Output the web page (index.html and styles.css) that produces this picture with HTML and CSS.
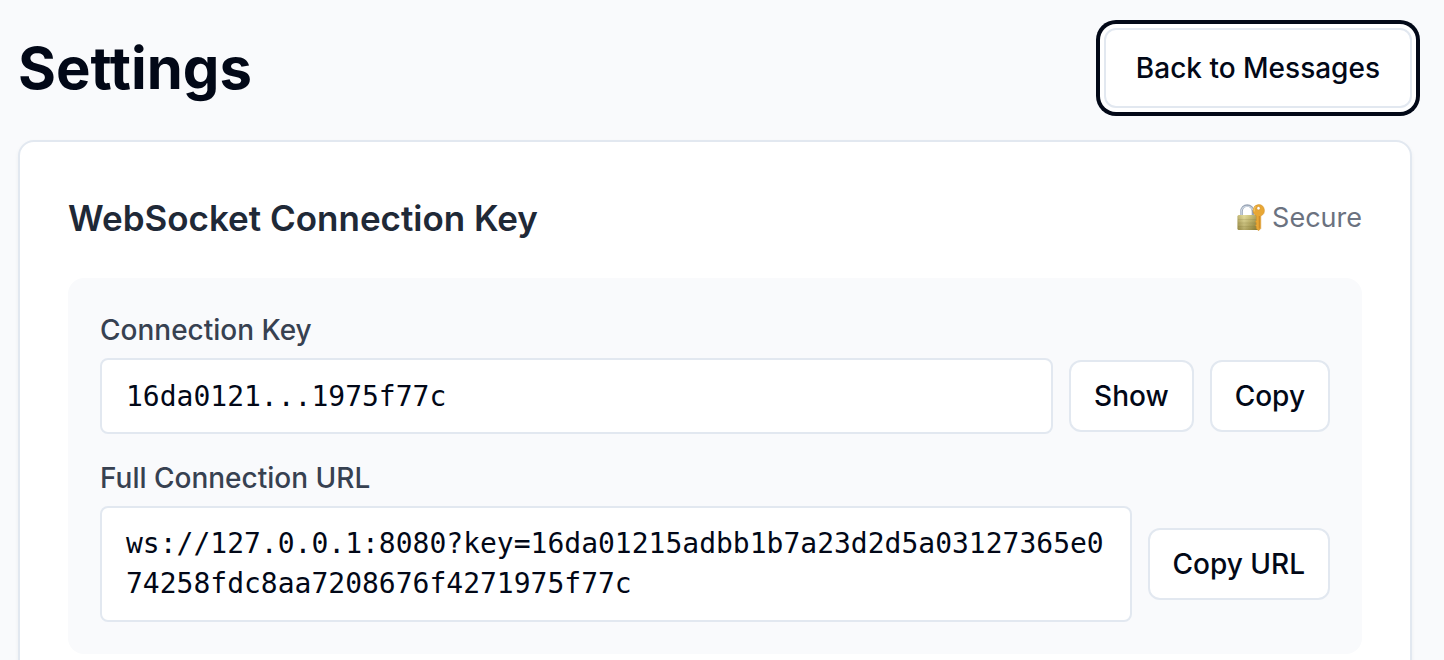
FILE: index.html
```
<!DOCTYPE html>
<html lang="en">
<head>
  <meta charset="utf-8">
  <title>Settings</title>
  <link rel="stylesheet" href="styles.css">
</head>
<body>
  <main class="page">
    <header class="page-header">
      <h1 class="page-title">Settings</h1>
      <button class="button button-large button-focused" type="button">Back to Messages</button>
    </header>

    <section class="card">
      <div class="card-header">
        <h2 class="card-title">WebSocket Connection Key</h2>
        <span class="secure">
          <svg class="secure-icon" viewBox="0 0 30 30" aria-hidden="true">
            <defs>
              <linearGradient id="body" x1="0" y1="0" x2="1" y2="0">
                <stop offset="0" stop-color="#a99c55"/>
                <stop offset="0.3" stop-color="#d9d08c"/>
                <stop offset="0.65" stop-color="#b0a458"/>
                <stop offset="1" stop-color="#807330"/>
              </linearGradient>
              <linearGradient id="shade" x1="0" y1="0" x2="0" y2="1">
                <stop offset="0" stop-color="#fff8c0" stop-opacity="0.3"/>
                <stop offset="1" stop-color="#6b5d20" stop-opacity="0.35"/>
              </linearGradient>
            </defs>
            <path d="M5.500 14V8.500a5.700 6 0 0 1 11.500 0V14" fill="none" stroke="#98a4b5" stroke-width="2.600"/>
            <path d="M5.200 13V8.500a6 6 0 0 1 11.500-1.500" fill="none" stroke="#cdd6e1" stroke-width="1.200"/>
            <rect x="1.500" y="12" width="22" height="15" rx="1.500" fill="url(#body)"/>
            <rect x="1.500" y="12" width="22" height="15" rx="1.500" fill="url(#shade)"/>
            <path d="M2 16.500h21M2 20h21M2 23.500h21" stroke="#81763a" stroke-opacity="0.18"/>
            <path fill-rule="evenodd" fill="#e8a735" stroke="#d08e28" stroke-width="0.500" d="M22.500 1.500a6 6 0 0 1 2.300 11.500V25.500l-2.300 2.300-2.200-2.200v-2l-1-1 1-1.200v-1.600l-1-1 1-1.200v-4.800A6 6 0 0 1 22.500 1.500zM22.500 3.500a1.700 1.700 0 1 0 0 3.400a1.700 1.700 0 0 0 0-3.400z"/>
            <path d="M23.300 13V25.500" stroke="#c07c22" stroke-width="0.800"/>
            <path d="M18.200 8.500a4.500 4.500 0 0 1 1.500-5" fill="none" stroke="#f8cf70"/>
          </svg>
          Secure
        </span>
      </div>

      <div class="panel">
        <div class="field">
          <label class="field-label" for="key">Connection Key</label>
          <div class="field-row">
            <input class="field-value" id="key" type="text" value="16da0121...1975f77c" readonly>
            <button class="button" type="button">Show</button>
            <button class="button" type="button">Copy</button>
          </div>
        </div>
        <div class="field">
          <label class="field-label" for="url">Full Connection URL</label>
          <div class="field-row">
            <textarea class="field-value" id="url" rows="2" readonly>ws://127.0.0.1:8080?key=16da01215adbb1b7a23d2d5a03127365e074258fdc8aa7208676f4271975f77c</textarea>
            <button class="button" type="button">Copy URL</button>
          </div>
        </div>
      </div>
    </section>
  </main>
</body>
</html>
```
FILE: styles.css
```
* {
  box-sizing: border-box;
}

body {
  margin: 0;
  background: #f9fafc;
  color: #020817;
  font-family: Inter, "Liberation Sans", sans-serif;
  font-size: 28px;
  line-height: 40px;
}

.page {
  padding: 28px 32px 32px 18px;
}

.page-header,
.card-header {
  display: flex;
  align-items: center;
  justify-content: space-between;
  margin-bottom: 32px;
}

.page-title {
  margin: 0;
  font-size: 58px;
  font-weight: 700;
  line-height: 72px;
}

.button {
  flex: none;
  height: 72px;
  padding: 0 23px;
  border: 2px solid #e2e8f0;
  border-radius: 12px;
  background: #fff;
  color: inherit;
  font: inherit;
  font-weight: 500;
  white-space: nowrap;
}

.button-large {
  height: 80px;
  padding: 0 30px;
}

.button-focused {
  box-shadow: 0 0 0 4px #fff, 0 0 0 8px #020817;
}

.card {
  padding: 48px;
  border: 2px solid #e2e8f0;
  border-radius: 16px;
  background: #fff;
  box-shadow: 0 2px 4px rgba(0, 0, 0, 0.05);
}

.card-title {
  margin: 0;
  color: #1f2937;
  font-size: 35px;
  font-weight: 600;
  line-height: 56px;
}

.secure {
  display: flex;
  align-items: center;
  gap: 6px;
  color: #6b7280;
  font-size: 27px;
}

.secure-icon {
  width: 30px;
  height: 30px;
}

.panel {
  display: flex;
  flex-direction: column;
  gap: 24px;
  padding: 32px;
  border-radius: 16px;
  background: #f9fafc;
}

.field-label {
  display: block;
  margin-bottom: 8px;
  color: #374151;
  font-weight: 500;
}

.field-row {
  display: flex;
  align-items: center;
  gap: 16px;
}

.field-value {
  display: block;
  flex: 1;
  min-width: 0;
  margin: 0;
  padding: 16px 20px 16px 24px;
  border: 2px solid #e2e8f0;
  border-radius: 8px;
  background: #fff;
  color: inherit;
  font-family: "DejaVu Sans Mono", monospace;
  font-size: 28px;
  line-height: 40px;
  word-break: break-all;
  resize: none;
  overflow: hidden;
}

input.field-value {
  height: 76px;
}
```
